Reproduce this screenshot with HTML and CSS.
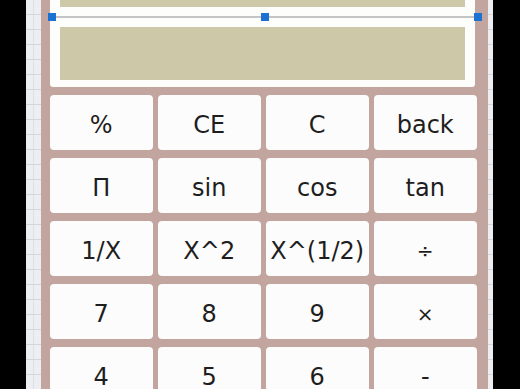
FILE: index.html
```html
<!DOCTYPE html>
<html>
<head>
<meta charset="utf-8">
<link rel="stylesheet" href="styles.css">
</head>
<body>
<div class="stage">
  <div class="void"></div>
  <div class="gutter gutter-left"></div>
  <div class="calc">
    <div class="screen">
      <div class="display display-top"></div>
      <div class="gap"></div>
      <div class="display display-main"></div>
    </div>
    <div class="keys">
      <button class="key">%</button>
      <button class="key">CE</button>
      <button class="key">C</button>
      <button class="key">back</button>
      <button class="key">Π</button>
      <button class="key">sin</button>
      <button class="key">cos</button>
      <button class="key">tan</button>
      <button class="key">1/X</button>
      <button class="key">X^2</button>
      <button class="key">X^(1/2)</button>
      <button class="key op">÷</button>
      <button class="key">7</button>
      <button class="key">8</button>
      <button class="key">9</button>
      <button class="key op">×</button>
      <button class="key">4</button>
      <button class="key">5</button>
      <button class="key">6</button>
      <button class="key">-</button>
    </div>
    <div class="selection">
      <span class="sel-line"></span>
      <span class="handle h-left"></span>
      <span class="handle h-mid"></span>
      <span class="handle h-right"></span>
    </div>
  </div>
  <div class="gutter gutter-right"></div>
  <div class="void"></div>
</div>
</body>
</html>
```

FILE: styles.css
```css
html, body {
  margin: 0;
  padding: 0;
  background: #000;
  width: 520px;
  height: 389px;
  overflow: hidden;
}

.stage {
  display: flex;
  height: 389px;
}

.void {
  flex: 0 0 26px;
  background: #000;
}

.stage .void:last-child {
  flex: 1 1 auto;
}

.gutter {
  background-color: #eceef2;
  background-image:
    repeating-linear-gradient(to bottom, transparent 0, transparent 14px, #d3d6dc 14px, #d3d6dc 15px),
    repeating-linear-gradient(to right, transparent 0, transparent 7px, #dde0e5 7px, #dde0e5 8px);
}

.gutter-left {
  flex: 0 0 15px;
}

.gutter-right {
  flex: 0 0 5px;
}

.calc {
  position: relative;
  flex: 0 0 447px;
  background: #c1a59e;
  padding: 0 11px 0 9px;
  box-sizing: border-box;
}

.screen {
  width: 425px;
  background: #fdfdfb;
  padding: 0 10px 7px 10px;
  box-sizing: border-box;
  display: flex;
  flex-direction: column;
  border-radius: 0 0 3px 3px;
}

.display {
  background: #cdc9a8;
}

.display-top {
  height: 7px;
}

.gap {
  height: 20px;
}

.display-main {
  height: 53px;
}

.keys {
  margin-top: 8px;
  display: grid;
  grid-template-columns: repeat(4, 102.5px);
  grid-auto-rows: 55px;
  column-gap: 5.5px;
  row-gap: 8px;
}

.key {
  border: none;
  margin: 0;
  padding: 0;
  background: #fdfcfc;
  border-radius: 4px;
  font-family: "DejaVu Sans", sans-serif;
  font-size: 24px;
  color: #1e1e1e;
  padding-top: 5px;
  white-space: nowrap;
}

.key.op {
  font-size: 20px;
}

.selection {
  position: absolute;
  left: 0;
  top: 0;
  width: 100%;
  height: 0;
}

.sel-line {
  position: absolute;
  left: 11px;
  top: 16px;
  width: 426px;
  height: 2px;
  background: #c4c4c6;
}

.handle {
  position: absolute;
  top: 13px;
  width: 8px;
  height: 8px;
  background: #1b72d2;
}

.h-left { left: 7px; }
.h-mid { left: 220px; }
.h-right { left: 433px; }
```
